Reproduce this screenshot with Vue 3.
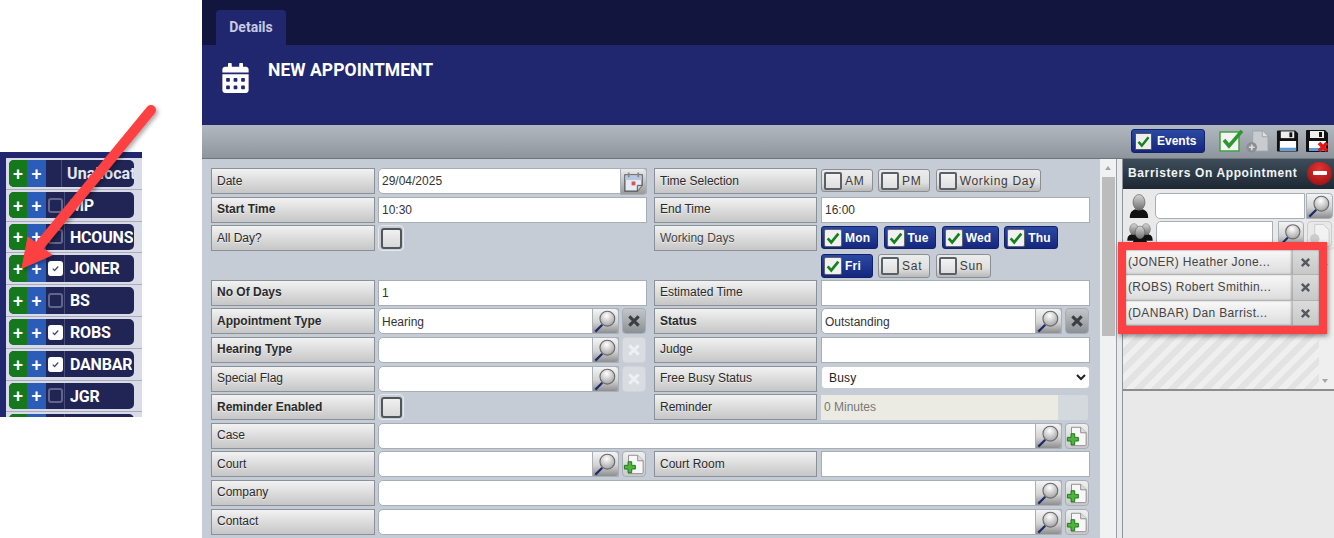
<script setup>
const people = [
  { code: 'Unallocated', head: true },
  { code: 'MP' },
  { code: 'HCOUNS' },
  { code: 'JONER', on: true },
  { code: 'BS' },
  { code: 'ROBS', on: true },
  { code: 'DANBAR', on: true },
  { code: 'JGR' },
  { code: '' },
]
const L = (text, bold = false, low = false) => ({ kind: 'label', text, bold, low })
const I = (value = '', extra = {}) => ({ kind: 'input', value, ...extra })
const rows = [
  L('Date', false, true), I('29/04/2025', { round: true, cal: true }),
  { ...L('Time Selection', false, true), right: true }, { kind: 'toggles', items: [{ t: 'AM', w: 'w51' }, { t: 'PM', w: 'w52' }, { t: 'Working Day', w: 'w105' }] },
  L('Start Time', true), I('10:30'),
  { ...L('End Time'), right: true }, I('16:00'),
  L('All Day?', false, true), { kind: 'check' },
  { ...L('Working Days', false, true), right: true, dim: true },
  { kind: 'toggles', items: [{ t: 'Mon', on: true, w: 'w57' }, { t: 'Tue', on: true, w: 'w53' }, { t: 'Wed', on: true, w: 'w57' }, { t: 'Thu', on: true, w: 'w54' }] },
  { kind: 'blank', cls: 'span3' },
  { kind: 'toggles', flush: true, items: [{ t: 'Fri', on: true, w: 'w51' }, { t: 'Sat', w: 'w52' }, { t: 'Sun', w: 'w55' }] },
  L('No Of Days', true), I('1'),
  { ...L('Estimated Time'), right: true }, I(''),
  L('Appointment Type', true, true), I('Hearing', { round: true, mag: true, extra: 'x', low: true }),
  { ...L('Status', true, true), right: true }, I('Outstanding', { round: true, mag: true, extra: 'x', low: true }),
  L('Hearing Type', true), I('', { round: true, mag: true, extra: 'xoff' }),
  { ...L('Judge'), right: true }, I(''),
  L('Special Flag'), I('', { round: true, mag: true, extra: 'xoff' }),
  { ...L('Free Busy Status'), right: true }, { kind: 'select', value: 'Busy' },
  L('Reminder Enabled', true, true), { kind: 'check' },
  { ...L('Reminder', false, true), right: true }, { kind: 'reminder', value: '0 Minutes' },
  L('Case'), I('', { round: true, mag: true, extra: 'add', wide: true }),
  L('Court', false, true), I('', { round: true, mag: true, extra: 'add' }),
  { ...L('Court Room', false, true), right: true }, I(''),
  L('Company'), I('', { round: true, mag: true, extra: 'add', wide: true }),
  L('Contact'), I('', { round: true, mag: true, extra: 'add', wide: true }),
]
const assigned = ['(JONER) Heather Jone...', '(ROBS) Robert Smithin...', '(DANBAR) Dan Barrist...']
</script>

<template>
  <div class="page">
    <svg class="defs" aria-hidden="true">
      <defs>
        <radialGradient id="lens" cx="45%" cy="30%" r="75%">
          <stop offset="0" stop-color="#ffffff" />
          <stop offset="1" stop-color="#9d9d9d" />
        </radialGradient>
        <linearGradient id="bust" x1="0" y1="0" x2="0" y2="1">
          <stop offset="0" stop-color="#d6d6d6" />
          <stop offset="1" stop-color="#6d6d6d" />
        </linearGradient>
        <symbol id="mag" viewBox="0 0 27 26">
          <line x1="10" y1="17" x2="2.5" y2="24.5" stroke="#1c2a6e" stroke-width="2.4" />
          <circle cx="15.5" cy="10.5" r="8" fill="url(#lens)" stroke="#6a6a6a" stroke-width="1.2" />
        </symbol>
        <symbol id="addpage" viewBox="0 0 24 24">
          <path d="M6 2.5h10l6 6V21a1.5 1.5 0 0 1-1.500 1.500H6z" fill="#f7f7f7" stroke="#888" />
          <path d="M16 2.500v6h6" fill="#ddd" stroke="#888" />
          <path d="M5.500 9.500h4v4h4v4h-4v4h-4v-4h-4v-4h4z" fill="#4cb53a" stroke="#1f6e1c" />
        </symbol>
        <symbol id="tick" viewBox="0 0 18 18">
          <path d="M3 9.500l4 4.500 8-10" fill="none" stroke="#15821d" stroke-width="3" />
        </symbol>
        <symbol id="cross" viewBox="0 0 12 12">
          <path d="M2 2l8 8M10 2l-8 8" fill="none" stroke="currentColor" stroke-width="2.600" />
        </symbol>
        <symbol id="floppy" viewBox="0 0 24 24">
          <path d="M2 1h18l3 3v18a1 1 0 0 1-1 1H2a1 1 0 0 1-1-1V2a1 1 0 0 1 1-1z" fill="#111" />
          <rect x="5" y="2" width="14" height="7" fill="#eee" />
          <rect x="14" y="3" width="3" height="5" fill="#111" />
          <rect x="4" y="12" width="17" height="10" fill="#fff" />
          <rect x="4" y="19" width="17" height="3" fill="#5f9bd8" />
        </symbol>
        <symbol id="person" viewBox="0 0 24 26">
          <ellipse cx="12" cy="9" rx="6.500" ry="8.500" fill="url(#bust)" stroke="#444" stroke-width=".6" />
          <path d="M2 26c0-6 2-8 6-9.500 2 1.500 6 1.500 8 0 4 1.500 6 3.500 6 9.500z" fill="#111" />
        </symbol>
      </defs>
    </svg>

    <section class="snippet">
      <div class="clip">
        <div v-for="p in people" :key="p.code" class="prow">
          <div class="pill">
            <span class="pg">+</span>
            <span class="pb">+</span>
            <span class="pc" :class="{ phead: p.head }">
              <i v-if="!p.head" class="pbox" :class="{ pon: p.on }">
                <svg v-if="p.on" viewBox="0 0 12 12"><path d="M3 6.200l2 2 4-4.400" fill="none" stroke="#41457c" stroke-width="1.300" /></svg>
              </i>
            </span>
            <span class="pn" :class="{ pnh: p.head }">{{ p.code }}</span>
          </div>
        </div>
      </div>
    </section>

    <main class="win">
      <div class="tabs"><span class="tab">Details</span></div>
      <header class="head">
        <svg class="hicon" viewBox="0 0 448 512"><path fill="#fff" d="M0 464c0 26.500 21.500 48 48 48h352c26.500 0 48-21.500 48-48V192H0v272zm320-196c0-6.600 5.400-12 12-12h40c6.600 0 12 5.400 12 12v40c0 6.600-5.400 12-12 12h-40c-6.600 0-12-5.400-12-12v-40zm0 128c0-6.600 5.400-12 12-12h40c6.600 0 12 5.400 12 12v40c0 6.600-5.400 12-12 12h-40c-6.600 0-12-5.400-12-12v-40zM192 268c0-6.600 5.400-12 12-12h40c6.600 0 12 5.400 12 12v40c0 6.600-5.400 12-12 12h-40c-6.600 0-12-5.400-12-12v-40zm0 128c0-6.600 5.400-12 12-12h40c6.600 0 12 5.400 12 12v40c0 6.600-5.400 12-12 12h-40c-6.600 0-12-5.400-12-12v-40zM64 268c0-6.600 5.400-12 12-12h40c6.600 0 12 5.400 12 12v40c0 6.600-5.400 12-12 12H76c-6.600 0-12-5.400-12-12v-40zm0 128c0-6.600 5.400-12 12-12h40c6.600 0 12 5.400 12 12v40c0 6.600-5.400 12-12 12H76c-6.600 0-12-5.400-12-12v-40zM400 64h-48V16c0-8.800-7.200-16-16-16h-32c-8.800 0-16 7.200-16 16v48H160V16c0-8.800-7.200-16-16-16h-32c-8.800 0-16 7.200-16 16v48H48C21.500 64 0 85.500 0 112v48h448v-48c0-26.500-21.500-48-48-48z" /></svg>
        <h1 class="title">NEW APPOINTMENT</h1>
      </header>
      <div class="toolbar">
        <span class="events"><i class="evbox"><svg><use href="#tick" /></svg></i>Events</span>
        <svg class="tb tbcheck" viewBox="0 0 24 24">
          <rect x="1" y="3" width="19" height="19" fill="#f4f4f4" stroke="#3fa33f" stroke-width="1.500" />
          <path d="M5 11l5 6L23 2" fill="none" stroke="#2f962f" stroke-width="3.600" />
        </svg>
        <svg class="tb tbadd" viewBox="0 0 24 24">
          <path d="M7 1h10l6 6v15H7z" fill="#c8ccd0" stroke="#a0a4a8" />
          <path d="M17 1v6h6" fill="#dfe2e4" stroke="#a0a4a8" />
          <circle cx="6" cy="18" r="5.500" fill="#8a8e92" />
          <path d="M6 15v6M3 18h6" stroke="#ddd" stroke-width="1.800" />
        </svg>
        <svg class="tb tbsave"><use href="#floppy" /></svg>
        <svg class="tb tbclose" viewBox="0 0 24 24">
          <use href="#floppy" width="24" height="24" />
          <path d="M14 14l8 8M22 14l-8 8" stroke="#e01515" stroke-width="3.600" />
        </svg>
      </div>

      <div class="body">
        <div class="form">
          <template v-for="(c, i) in rows" :key="i">
            <div v-if="c.kind === 'label'" class="lab" :class="{ b: c.bold, r: c.right, dim: c.dim, low: c.low }"><span>{{ c.text }}</span></div>

            <div v-else-if="c.kind === 'blank'" :class="c.cls"></div>

            <div v-else-if="c.kind === 'input'" class="field" :class="{ wide: c.wide }">
              <div class="box" :class="{ round: c.round }">
                <span class="val" :class="{ vlow: c.low }">{{ c.value }}</span>
                <span v-if="c.mag" class="magbtn"><svg><use href="#mag" /></svg></span>
                <span v-if="c.cal" class="calbtn">
                  <svg viewBox="0 0 24 24">
                    <path d="M3 5h18v11l-5 6H3z" fill="#e6ecf6" stroke="#555" stroke-width="1.300" />
                    <rect x="3.500" y="5.500" width="17" height="5" fill="#b7c8e4" />
                    <path d="M7 2.500v5M17 2.500v5" stroke="#888" stroke-width="1.800" />
                    <rect x="10" y="12" width="4" height="4" fill="#d9534f" />
                    <path d="M16 22v-6h5" fill="#ccc" stroke="#555" />
                  </svg>
                </span>
              </div>
              <span v-if="c.extra === 'x'" class="xbtn"><svg><use href="#cross" /></svg></span>
              <span v-else-if="c.extra === 'xoff'" class="xbtn off"><svg><use href="#cross" /></svg></span>
              <span v-else-if="c.extra === 'add'" class="addbtn"><svg><use href="#addpage" /></svg></span>
            </div>

            <div v-else-if="c.kind === 'check'" class="chk"><i></i></div>

            <div v-else-if="c.kind === 'toggles'" class="toggles" :class="{ flush: c.flush }">
              <span v-for="t in c.items" :key="t.t" class="tog" :class="[t.w, { on: t.on }]">
                <i><svg v-if="t.on"><use href="#tick" /></svg></i>{{ t.t }}
              </span>
            </div>

            <div v-else-if="c.kind === 'select'" class="selwrap">
              <select class="sel"><option>{{ c.value }}</option></select>
            </div>

            <div v-else-if="c.kind === 'reminder'" class="rem"><span class="remv">{{ c.value }}</span></div>
          </template>
        </div>

        <div class="vbar"><span class="up"></span><span class="thumb"></span></div>
        <div class="split"></div>

        <aside class="side">
          <div class="shead">
            <span>Barristers On Appointment</span>
            <i class="minus"></i>
          </div>
          <div class="look one">
            <svg class="who"><use href="#person" /></svg>
            <div class="sinput"></div>
            <span class="smag"><svg><use href="#mag" /></svg></span>
          </div>
          <div class="look two">
            <svg class="who group" viewBox="0 0 28 24">
              <use href="#person" x="0" y="0" width="16" height="20" />
              <use href="#person" x="12" y="0" width="16" height="20" />
              <use href="#person" x="5" y="3" width="18" height="21" />
            </svg>
            <div class="sinput short"></div>
            <span class="smag m"><svg><use href="#mag" /></svg></span>
            <span class="sadd">
              <svg viewBox="0 0 24 24"><path d="M7 2h9l6 6v14H7z" fill="#f2f2f2" stroke="#ccc" /><circle cx="7" cy="17" r="5" fill="#ccc" /></svg>
            </span>
          </div>
          <div class="list">
            <div class="items">
              <div v-for="a in assigned" :key="a" class="item">
                <span class="iname">{{ a }}</span>
                <span class="idel"><svg><use href="#cross" /></svg></span>
              </div>
            </div>
            <div class="lbar"><span class="au"></span><span class="ad"></span></div>
          </div>
          <div class="sfoot"></div>
          <div class="redbox"></div>
        </aside>
      </div>
    </main>

    <svg class="arrow" viewBox="0 0 170 290">
      <defs>
        <filter id="ash" x="-20%" y="-20%" width="140%" height="140%">
          <feDropShadow dx="2" dy="2" stdDeviation="2" flood-color="#000" flood-opacity=".35" />
        </filter>
      </defs>
      <g filter="url(#ash)">
        <line x1="151" y1="110" x2="40" y2="245" stroke="#fd4143" stroke-width="10" stroke-linecap="round" />
        <path d="M22 268L28 237L52 255z" fill="#fd4143" stroke="#fd4143" stroke-linejoin="round" />
      </g>
    </svg>
  </div>
</template>

<style>
html, body { margin: 0; background: #fff; }
</style>

<style scoped>
.page {
  width: 1334px;
  height: 538px;
  display: flex;
  overflow: hidden;
  position: relative;
  background: #fff;
  font-family: "Liberation Sans", Arial, sans-serif;
  font-size: 12px;
  color: #333;
}
.defs { position: absolute; width: 0; height: 0; }

/* pasted list snippet */
.snippet { width: 202px; flex: none; padding-top: 152px; box-sizing: border-box; }
.clip {
  width: 142px;
  height: 265px;
  overflow: hidden;
  box-sizing: border-box;
  background: #d9dce8;
  border-left: 6px solid #20276f;
  border-top: 6px solid #20276f;
}
.prow {
  height: 31.800px;
  box-sizing: border-box;
  padding: 2px 8px 0 3px;
  border-bottom: 1px solid #aaadb8;
}
.pill {
  height: 26.500px;
  display: flex;
  border-radius: 5px;
  overflow: hidden;
  background: #212555;
  font-family: Roboto, sans-serif;
  font-weight: 700;
  color: #fff;
}
.pg, .pb {
  display: flex;
  align-items: center;
  justify-content: center;
  font-size: 18px;
  font-weight: 500;
  flex: none;
}
.pg { width: 18px; background: #15781a; }
.pb { width: 19px; background: #2a5cb8; }
.pc {
  width: 18px;
  flex: none;
  display: flex;
  align-items: center;
  justify-content: center;
  border-right: 1px solid #4a4e7c;
}
.phead { width: 15px; }
.pbox {
  width: 15px;
  height: 15px;
  margin-left: 1px;
  box-sizing: border-box;
  border: 2px solid #62668a;
  border-radius: 3px;
}
.pon { background: #fff; border-color: #fff; }
.pbox svg { display: block; width: 11px; height: 11px; }
.pn {
  padding-left: 5px;
  font-size: 16px;
  line-height: 27px;
  white-space: nowrap;
  overflow: hidden;
  letter-spacing: -.2px;
}
.pnh { color: #e4e6f2; letter-spacing: .1px; }

/* window */
.win { flex: 1; min-width: 0; display: flex; flex-direction: column; height: 538px; background: #c5ccd5; }
.tabs { height: 45px; flex: none; background: #12163f; display: flex; align-items: flex-end; padding-left: 14px; box-sizing: border-box; }
.tab {
  width: 70px;
  height: 35px;
  background: #20276f;
  border-radius: 4px 4px 0 0;
  color: #c8cbe2;
  font: 700 14px/34px Roboto, sans-serif;
  text-align: center;
}
.head { height: 80px; flex: none; background: #20276f; display: flex; box-sizing: border-box; padding: 18px 0 0 20px; }
.hicon { width: 27px; height: 30px; margin-right: 19px; }
.title { margin: -5px 0 0; font: 700 17.500px/24px Roboto, sans-serif; color: #fff; letter-spacing: .05px; }
.toolbar {
  height: 34px;
  flex: none;
  box-sizing: border-box;
  background: linear-gradient(#b1b8bf, #8e959c);
  border-bottom: 1px solid #6f757c;
  display: flex;
  align-items: center;
  justify-content: flex-end;
  padding: 0 5px 1px 0;
}
.events {
  width: 74px;
  height: 24px;
  box-sizing: border-box;
  border: 1px solid #12226a;
  border-radius: 3px;
  background: linear-gradient(#2a4aa4, #15267a);
  color: #fff;
  font-weight: 700;
  font-size: 12px;
  display: flex;
  align-items: center;
  gap: 5px;
  padding-left: 3px;
  margin-right: 14px;
}
.evbox { width: 17px; height: 17px; background: #eee; border: 1px solid #555; box-sizing: border-box; }
.evbox svg { display: block; width: 15px; height: 15px; }
.tb { display: block; flex: none; }
.tbcheck { width: 24px; height: 24px; margin-right: 3px; }
.tbadd { width: 23px; height: 23px; margin-right: 7px; }
.tbsave { width: 23px; height: 24px; margin-right: 6px; }
.tbclose { width: 24px; height: 24px; }

.body { flex: 1; min-height: 0; display: flex; position: relative; }
.form {
  width: 898px;
  flex: none;
  box-sizing: border-box;
  padding: 9px 0 0 9px;
  display: grid;
  grid-template-columns: 167px 276px 167px 269px;
  grid-template-rows: 29px 28px 29px 26px 28px 29px 29px 28px 29px 28px 29px 29px 29px;
}
.lab {
  width: 164px;
  height: 26px;
  box-sizing: border-box;
  border: 1px solid #8b9198;
  background: linear-gradient(#f2f2f2, #c6c6c6);
  padding-left: 5px;
  color: #2a2a2a;
  font-size: 12px;
  line-height: 23px;
  text-shadow: 0 1px 0 rgba(255, 255, 255, .6);
}
.lab.r { width: 163px; }
.lab.low { line-height: 25px; }
.lab.b { font-weight: 700; }
.lab.dim { color: #444; }
.span3 { grid-column: 1 / span 3; }

.field { width: 269px; height: 26px; display: flex; }
.field.wide { width: 712px; grid-column: span 3; }
.box {
  flex: 1;
  min-width: 0;
  box-sizing: border-box;
  background: #fff;
  border: 1px solid #a8aeb6;
  display: flex;
  align-items: center;
}
.box.round { border-radius: 5px 0 0 5px; }
.val { flex: 1; padding-left: 3px; color: #333; }
.vlow { padding-top: 2px; }
.magbtn {
  width: 27px;
  height: 26px;
  margin: -1px -1px -1px 0;
  flex: none;
  box-sizing: border-box;
  background: linear-gradient(#f4f4f4, #d4d4d4 55%, #8e8e8e);
  border: 1px solid #aab0b8;
  border-radius: 0 4px 4px 0;
}
.magbtn svg, .smag svg { display: block; width: 100%; height: 100%; }
.calbtn {
  width: 27px;
  height: 27px;
  margin: -1px -1px -1px 0;
  flex: none;
  box-sizing: border-box;
  background: linear-gradient(#ececec, #9a9a9a);
  border: 1px solid #aab0b8;
  border-radius: 0 4px 4px 0;
  padding: 1px;
}
.calbtn svg { display: block; width: 100%; height: 100%; }
.xbtn {
  width: 24px;
  height: 26px;
  margin: 0 1px 0 3px;
  flex: none;
  box-sizing: border-box;
  border: 1px solid #a8aeb6;
  border-radius: 4px;
  background: linear-gradient(#c4c7ca, #8c9094);
  color: #3a3f44;
  display: flex;
  align-items: center;
  justify-content: center;
}
.xbtn svg { width: 14px; height: 14px; }
.xbtn.off { background: #d9dde1; color: #eef0f2; border-color: #d0d4d9; }
.addbtn {
  width: 24px;
  height: 26px;
  margin: 0 1px 0 3px;
  flex: none;
  box-sizing: border-box;
  border: 1px solid #a8aeb6;
  border-radius: 4px;
  background: linear-gradient(#f0f0f0, #c9c9c9);
}
.addbtn svg { display: block; width: 100%; height: 100%; }

.chk {
  width: 26px;
  height: 26px;
  box-sizing: border-box;
  border: 1px solid #e6e9ec;
  border-radius: 4px;
  background: #c9ced4;
  display: flex;
  align-items: center;
  justify-content: center;
}
.chk i {
  width: 21px;
  height: 21px;
  box-sizing: border-box;
  border: 2px solid #50565c;
  border-radius: 3px;
  background: linear-gradient(#f0f0f0, #d8d8d8);
}

.toggles { display: flex; gap: 5.600px; height: 24px; padding-top: 1px; }
.toggles.flush { padding-top: 0; }
.tog {
  height: 23px;
  box-sizing: border-box;
  border: 1px solid #8b8f94;
  border-radius: 3px;
  background: linear-gradient(#ececec, #e0e0e0 60%, #b9b9b9);
  display: flex;
  align-items: center;
  padding-left: 2px;
  gap: 3px;
  color: #3a3a3a;
  font-size: 12px;
  letter-spacing: .7px;
  white-space: nowrap;
}
.flush .tog { height: 24px; }
.tog i {
  width: 18px;
  height: 18px;
  flex: none;
  box-sizing: border-box;
  border: 2px solid #5a6068;
  border-radius: 2px;
  background: linear-gradient(#f2f2f2, #dedede);
}
.tog i svg { display: block; width: 14px; height: 14px; }
.tog.on {
  border-color: #12206a;
  background: linear-gradient(#2a49a3, #15277f);
  color: #fff;
  font-weight: 700;
  letter-spacing: .2px;
}
.tog.on i { border: 1px solid #666; background: #f1f1f1; }
.tog.on i svg { width: 16px; height: 16px; }
.w51 { width: 51.500px; }
.w52 { width: 52px; }
.w53 { width: 52.500px; }
.w54 { width: 54px; }
.w55 { width: 55px; }
.w57 { width: 57px; }
.w105 { width: 105px; }

.selwrap { width: 269px; }
.sel {
  width: 269px;
  height: 23px;
  box-sizing: border-box;
  border: 1px solid #c7ccd2;
  border-radius: 4px;
  background: #fff;
  font: 12px "Liberation Sans", Arial, sans-serif;
  letter-spacing: .2px;
  color: #222;
  padding-left: 3px;
  display: block;
}
.rem {
  width: 267px;
  height: 25px;
  margin-top: 1px;
  border-radius: 2px;
  background: #d4d9de;
}
.remv {
  display: block;
  width: 237px;
  height: 25px;
  box-sizing: border-box;
  padding-left: 3px;
  background: #ebebe4;
  color: #777;
  line-height: 24px;
}

.vbar { width: 16px; flex: none; background: #f0f1f2; position: relative; display: flex; flex-direction: column; align-items: center; padding-top: 7px; box-sizing: border-box; }
.up { width: 0; height: 0; border: 3.500px solid transparent; border-top: 0; border-bottom: 4px solid #a5a5a5; }
.thumb { width: 13px; height: 159px; margin-top: 7px; background: #bcbcbc; }
.split { width: 7px; flex: none; box-sizing: border-box; background: #e9eaec; border-left: 1px solid #9a9fa5; border-right: 1px solid #8e9399; }

.side { flex: 1; min-width: 0; display: flex; flex-direction: column; background: #e9e9e9; position: relative; }
.shead {
  height: 30px;
  flex: none;
  box-sizing: border-box;
  background: linear-gradient(#3e4d5a, #1c2833);
  color: #f2f4f5;
  font-weight: 700;
  font-size: 12px;
  letter-spacing: .63px;
  display: flex;
  align-items: center;
  justify-content: space-between;
  padding: 0 2px 2px 5px;
}
.minus {
  width: 25px;
  height: 23px;
  border-radius: 50%;
  background: radial-gradient(circle at 50% 30%, #e43434, #8e0c0c);
  display: flex;
  align-items: center;
  justify-content: center;
  position: relative;
}
.minus::after { content: ""; width: 14px; height: 4px; border-radius: 1px; background: #fff; }
.look { display: flex; align-items: center; flex: none; padding-left: 5px; box-sizing: border-box; }
.one { height: 31px; padding-top: 2px; }
.two { height: 28px; }
.who { width: 22px; height: 26px; margin-right: 5px; margin-left: 0; }
.who.group { width: 28px; height: 24px; margin: 0 2px 0 -2px; }
.sinput { width: 150px; height: 26px; box-sizing: border-box; background: #fff; border: 1px solid #a8aeb6; border-radius: 5px 0 0 5px; }
.sinput.short { width: 117px; }
.smag {
  width: 27px;
  height: 26px;
  margin-left: 1px;
  box-sizing: border-box;
  background: linear-gradient(#f4f4f4, #d4d4d4 55%, #8e8e8e);
  border: 1px solid #aab0b8;
  border-radius: 0 4px 4px 0;
}
.smag.m { width: 26px; margin-left: 5px; }
.sadd { width: 25px; height: 26px; margin-left: 3px; box-sizing: border-box; background: #e9e9e9; border: 1px solid #ccc; border-radius: 4px; }
.sadd svg { display: block; width: 100%; height: 100%; }

.list {
  height: 144px;
  flex: none;
  margin-top: -1px;
  box-sizing: border-box;
  padding-top: 3px;
  border-bottom: 2px solid #8c8c8c;
  background: repeating-linear-gradient(135deg, #e3e3e3 0 6px, #efefef 6px 12px);
  display: flex;
  position: relative;
}
.items { flex: 1; min-width: 0; }
.item { height: 25.300px; display: flex; box-sizing: border-box; border-bottom: 1px solid #b3b3b3; }
.iname {
  flex: 1;
  min-width: 0;
  padding-left: 5px;
  background: linear-gradient(#f9f9f9, #dcdcdc);
  color: #444;
  font-size: 12px;
  letter-spacing: .35px;
  line-height: 25px;
  white-space: nowrap;
  overflow: hidden;
  box-shadow: inset -2px 0 2px rgba(0, 0, 0, .25);
}
.idel {
  width: 26px;
  flex: none;
  box-sizing: border-box;
  padding: 1px 2px 0 0;
  background: linear-gradient(#dcdcdc, #c8c8c8);
  color: #55595e;
  display: flex;
  align-items: center;
  justify-content: center;
}
.idel svg { width: 11px; height: 11px; }
.lbar { width: 15px; flex: none; background: #efefef; position: relative; }
.au, .ad { position: absolute; left: 3px; width: 0; height: 0; border: 3.500px solid transparent; }
.au { top: 11px; border-top: 0; border-bottom: 4px solid #a5a5a5; }
.ad { bottom: 6px; border-bottom: 0; border-top: 4px solid #a5a5a5; }
.sfoot { flex: 1; background: #e9e9e9; }

.redbox {
  position: absolute;
  left: -5px;
  top: 83px;
  width: 209px;
  height: 92px;
  box-sizing: border-box;
  border: 8px solid #fd4143;
  box-shadow: 1px 2px 5px rgba(0, 0, 0, .45), inset 0 0 2px rgba(0, 0, 0, .4);
  pointer-events: none;
}
.arrow { position: absolute; left: 0; top: 0; width: 170px; height: 290px; pointer-events: none; }
</style>
